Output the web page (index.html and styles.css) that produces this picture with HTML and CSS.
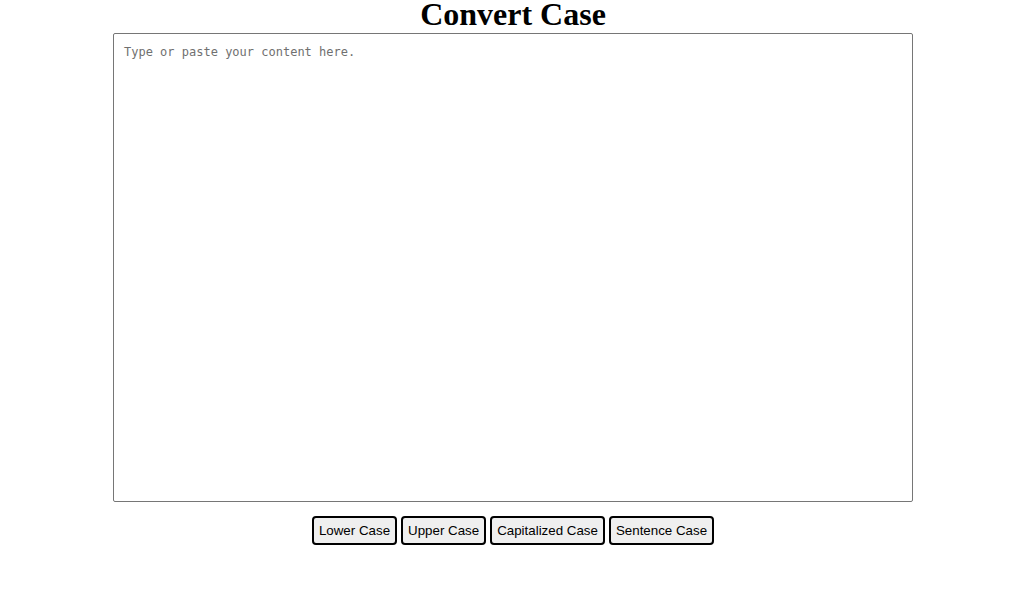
FILE: index.html
```html
<!DOCTYPE html>
<html>
<head>
<meta charset="utf-8">
<link rel="stylesheet" href="styles.css">
</head>
<body>
<main class="page">
  <h1 class="title">Convert Case</h1>
  <textarea class="editor" placeholder="Type or paste your content here."></textarea>
  <div class="actions">
    <button class="btn">Lower Case</button>
    <button class="btn">Upper Case</button>
    <button class="btn">Capitalized Case</button>
    <button class="btn">Sentence Case</button>
  </div>
</main>
</body>
</html>
```
FILE: styles.css
```css
html, body {
  margin: 0;
  padding: 0;
  background: #fff;
}
.page {
  display: flex;
  flex-direction: column;
  align-items: center;
  padding-left: 11px;
}
.title {
  margin: 0;
  padding-bottom: 4px;
  font-family: "Liberation Serif", serif;
  font-size: 32px;
  font-weight: bold;
  line-height: 29px;
  color: #000;
}
.editor {
  box-sizing: border-box;
  width: 800px;
  height: 469px;
  padding: 11px 10px 10px;
  border: 1px solid #767676;
  border-radius: 2px;
  font-family: "DejaVu Sans Mono", monospace;
  font-size: 12px;
  resize: none;
  outline: none;
}
.editor::placeholder {
  color: #707070;
}
.actions {
  display: flex;
  gap: 4px;
  margin-top: 14px;
}
.btn {
  box-sizing: border-box;
  height: 29px;
  padding: 0 5px;
  border: 2px solid #000;
  border-radius: 4px;
  background: #efefef;
  font-family: "Liberation Sans", Arial, sans-serif;
  font-size: 13.33px;
  color: #000;
}
```
